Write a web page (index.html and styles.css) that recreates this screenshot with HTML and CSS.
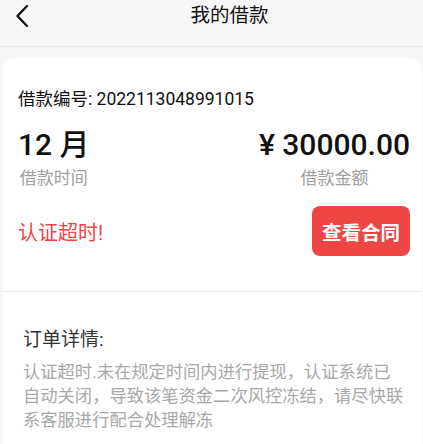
FILE: index.html
```html
<!DOCTYPE html>
<html lang="zh-CN">
<head>
    <meta charset="UTF-8">
    <title>我的借款</title>
    <link rel="stylesheet" href="styles.css">
</head>
<body>
    <div class="header">
        <span class="back">
            <svg width="14" height="24" viewBox="0 0 14 24"><path d="M12 2 L2.5 12 L12 22" fill="none" stroke="#111" stroke-width="2.4" stroke-linecap="round" stroke-linejoin="round"/></svg>
        </span>
        <h1>我的借款</h1>
    </div>

    <div class="card">
        <div class="summary">
            <p class="loan-no">借款编号: 2022113048991015</p>
            <div class="figures">
                <div class="figure">
                    <div class="big">12 月</div>
                    <div class="label">借款时间</div>
                </div>
                <div class="figure">
                    <div class="big">¥ 30000.00</div>
                    <div class="label">借款金额</div>
                </div>
            </div>
            <div class="status-row">
                <span class="status">认证超时!</span>
                <button class="btn">查看合同</button>
            </div>
        </div>
        <div class="details">
            <h3>订单详情:</h3>
            <p>认证超时.未在规定时间内进行提现，认证系统已自动关闭，导致该笔资金二次风控冻结，请尽快联系客服进行配合处理解冻</p>
        </div>
    </div>
</body>
</html>
```

FILE: styles.css
```css
body {
    margin: 0;
    background-color: #f7f7f7;
    font-family: Roboto, "Noto Sans CJK SC", sans-serif;
    color: #111;
}
.header {
    position: relative;
    height: 46px;
    border-bottom: 1px solid #e6e6e6;
    display: flex;
    justify-content: center;
}
.header h1 {
    margin: 0 0 0 36px;
    font-size: 19.5px;
    line-height: 32px;
    font-weight: normal;
}
.back {
    position: absolute;
    left: 15px;
    top: 4px;
}
.card {
    margin: 11px 1px 0 3px;
    background-color: white;
    border-radius: 10px 10px 0 0;
}
.summary {
    padding: 29px 12px 35px 15px;
    border-bottom: 1px solid #eeeeee;
}
.loan-no {
    margin: 0;
    font-size: 17.5px;
    line-height: 24px;
}
.figures {
    display: flex;
    justify-content: space-between;
    margin-top: 14px;
}
.figure {
    text-align: center;
}
.big {
    font-size: 30px;
    font-weight: 500;
    line-height: 40px;
}
.label {
    font-size: 17px;
    line-height: 26px;
    color: #a0a0a0;
}
.status-row {
    display: flex;
    justify-content: space-between;
    align-items: center;
    margin-top: 15px;
}
.status {
    font-size: 20px;
    color: #ee4444;
}
.btn {
    width: 98px;
    height: 50px;
    border: none;
    border-radius: 8px;
    background-color: #ee4545;
    color: white;
    font-family: inherit;
    font-size: 19.5px;
    font-weight: bold;
}
.details {
    padding: 35px 17px 20px 20px;
}
.details h3 {
    margin: 0 0 7px 0;
    font-size: 19px;
    font-weight: normal;
    color: #333;
    line-height: 26px;
}
.details p {
    margin: 0;
    font-size: 17.3px;
    line-height: 24px;
    color: #a8a8a8;
}
```
